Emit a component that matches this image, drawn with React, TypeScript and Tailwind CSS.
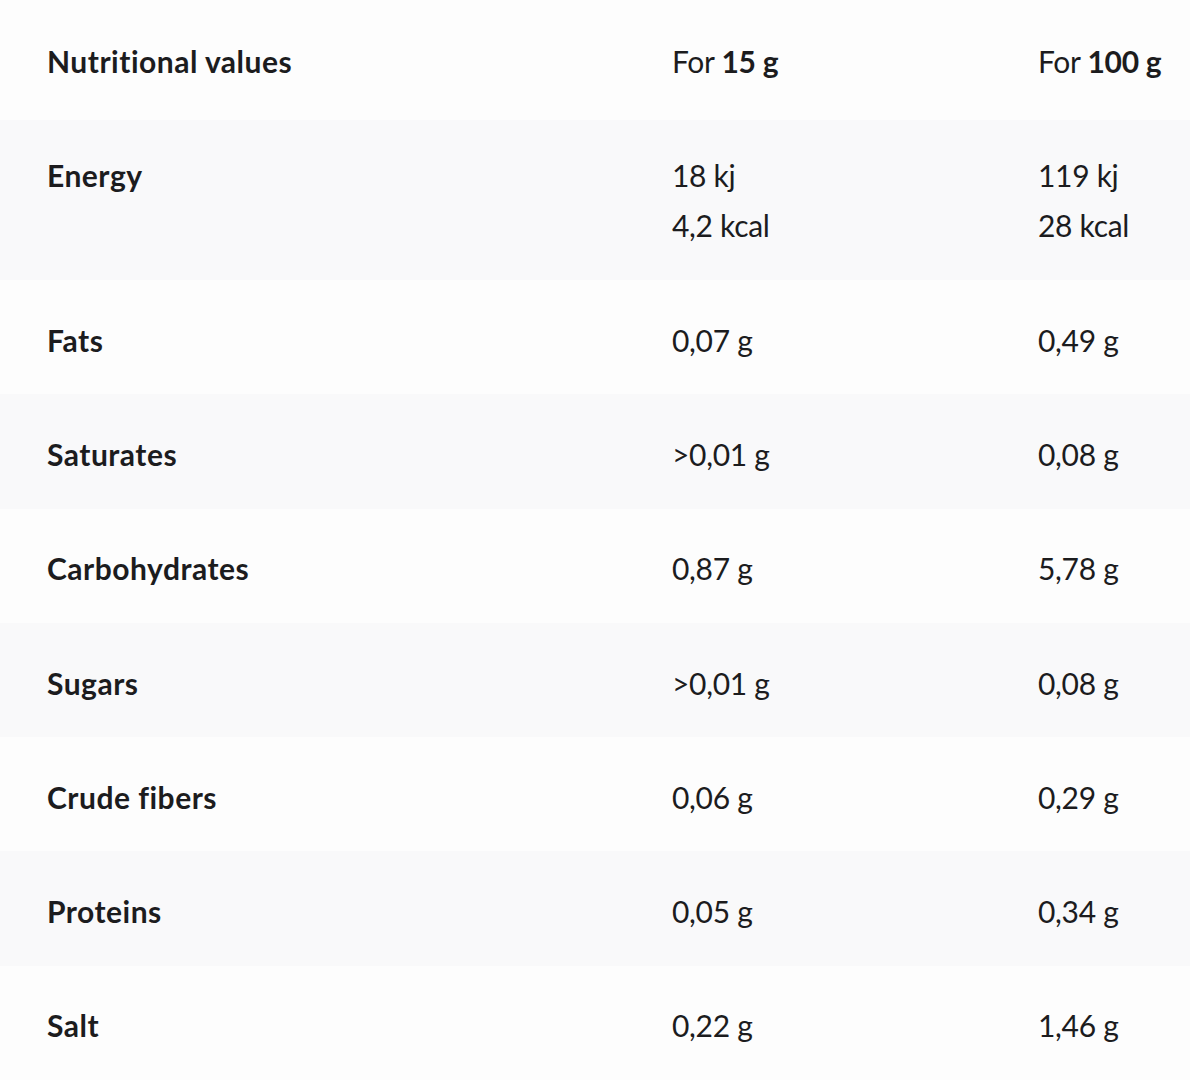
type Row = { label: string; per15: string[]; per100: string[] };

const rows: Row[] = [
  { label: "Energy", per15: ["18 kj", "4,2 kcal"], per100: ["119 kj", "28 kcal"] },
  { label: "Fats", per15: ["0,07 g"], per100: ["0,49 g"] },
  { label: "Saturates", per15: [">0,01 g"], per100: ["0,08 g"] },
  { label: "Carbohydrates", per15: ["0,87 g"], per100: ["5,78 g"] },
  { label: "Sugars", per15: [">0,01 g"], per100: ["0,08 g"] },
  { label: "Crude fibers", per15: ["0,06 g"], per100: ["0,29 g"] },
  { label: "Proteins", per15: ["0,05 g"], per100: ["0,34 g"] },
  { label: "Salt", per15: ["0,22 g"], per100: ["1,46 g"] },
];

export default function App() {
  return (
    <div
      className="min-h-[1088px] bg-white text-[30px] text-[#1c1c1e]"
      style={{ fontFamily: "Lato, 'Noto Sans', sans-serif" }}
    >
      <div className="grid h-[120px] grid-cols-[625px_366px_1fr] items-center bg-[#fdfdfd] pl-[47px] pt-[2px] leading-[42px]">
        <div className="font-bold tracking-[0.5px]">Nutritional values</div>
        <div className="tracking-[-0.3px]">
          For <span className="font-bold">15 g</span>
        </div>
        <div className="tracking-[-0.3px]">
          For <span className="font-bold">100 g</span>
        </div>
      </div>

      {rows.map((row, i) => {
        const multi = row.per15.length > 1;
        return (
          <div
            key={row.label}
            className={`grid grid-cols-[625px_366px_1fr] pl-[47px] leading-[50px] ${
              i % 2 === 0 ? "bg-[#f9f9fa]" : "bg-[#fdfdfd]"
            } ${multi ? "h-[160px] items-start pt-[30px]" : "h-[114.3px] items-center pt-[5px]"}`}
          >
            <div className="font-bold tracking-[0.5px]">{row.label}</div>
            <div className="tracking-[-0.3px]">
              {row.per15.map((v) => (
                <div key={v}>{v}</div>
              ))}
            </div>
            <div className="tracking-[-0.3px]">
              {row.per100.map((v) => (
                <div key={v}>{v}</div>
              ))}
            </div>
          </div>
        );
      })}
    </div>
  );
}
